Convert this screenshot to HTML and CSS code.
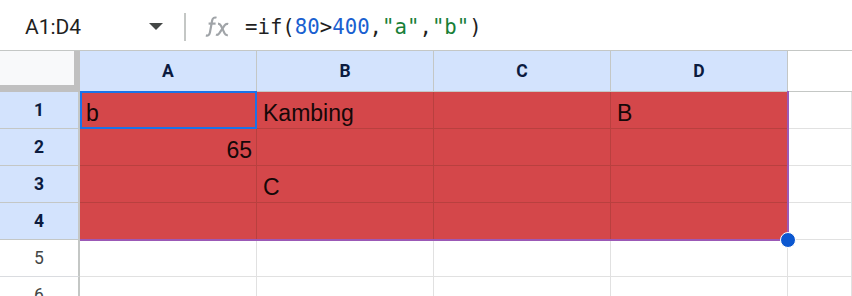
FILE: index.html
```html
<!DOCTYPE html>
<html lang="id">
<head>
    <meta charset="utf-8">
    <title>Sheet</title>
    <link rel="stylesheet" href="styles.css">
</head>
<body>
    <div class="formelbar">
        <div class="navnefelt">
            <span class="omraade">A1:D4</span>
            <span class="pil"></span>
        </div>
        <div class="skille"></div>
        <div class="fx">
            <svg width="25" height="24" viewBox="0 0 25 24">
                <path d="M11.5 2.8c-2-.8-3.8.2-4.3 2.4L4.9 17.6c-.5 2.4-2 3.4-4 2.8" fill="none" stroke="#a0a4a8" stroke-width="2.2"/>
                <path d="M3.6 8.6h7" stroke="#a0a4a8" stroke-width="2.2"/>
                <path d="M13 8.6c1.5 0 2.2.6 3 2.2l3.6 7.6c.7 1.5 1.5 2 3.2 1.7" fill="none" stroke="#a0a4a8" stroke-width="2.2"/>
                <path d="M23.2 9c-1.6-.6-2.6 0-3.6 1.4l-5.4 8c-1 1.4-2 1.8-3.2 1.2" fill="none" stroke="#a0a4a8" stroke-width="2.2"/>
            </svg>
        </div>
        <div class="formel">=if(<span class="tal">80</span>&gt;<span class="tal">400</span>,<span class="tekst">"a"</span>,<span class="tekst">"b"</span>)</div>
    </div>

    <div class="ark">
        <div class="gitter">
            <div class="hjorne"></div>
            <div class="kol valgt">A</div>
            <div class="kol valgt">B</div>
            <div class="kol valgt">C</div>
            <div class="kol valgt">D</div>
            <div class="kol tom"></div>

            <div class="raekke valgt">1</div>
            <div class="celle fyldt">b</div>
            <div class="celle fyldt">Kambing</div>
            <div class="celle fyldt"></div>
            <div class="celle fyldt">B</div>
            <div class="celle"></div>

            <div class="raekke valgt">2</div>
            <div class="celle fyldt tal-celle">65</div>
            <div class="celle fyldt"></div>
            <div class="celle fyldt"></div>
            <div class="celle fyldt"></div>
            <div class="celle"></div>

            <div class="raekke valgt">3</div>
            <div class="celle fyldt"></div>
            <div class="celle fyldt">C</div>
            <div class="celle fyldt"></div>
            <div class="celle fyldt"></div>
            <div class="celle"></div>

            <div class="raekke valgt">4</div>
            <div class="celle fyldt"></div>
            <div class="celle fyldt"></div>
            <div class="celle fyldt"></div>
            <div class="celle fyldt"></div>
            <div class="celle"></div>

            <div class="raekke">5</div>
            <div class="celle"></div>
            <div class="celle"></div>
            <div class="celle"></div>
            <div class="celle"></div>
            <div class="celle"></div>

            <div class="raekke">6</div>
            <div class="celle"></div>
            <div class="celle"></div>
            <div class="celle"></div>
            <div class="celle"></div>
            <div class="celle"></div>
        </div>

        <!-- markering ligger oven på gitteret -->
        <div class="omraade-ramme"></div>
        <div class="aktiv-ramme"></div>
        <div class="haandtag"></div>
    </div>
</body>
</html>
```

FILE: styles.css
```css
* {
    box-sizing: border-box;
}

body {
    margin: 0;
    font-family: "Liberation Sans", Arial, sans-serif;
    background-color: white;
    overflow: hidden;
}

.formelbar {
    height: 51px;
    display: flex;
    align-items: center;
    border-bottom: 1px solid #c4c7c5;
    padding-top: 3px;
}

.navnefelt {
    width: 184px;
    display: flex;
    align-items: center;
    justify-content: space-between;
    padding: 0 21px 0 25px;
    font-family: Roboto, "Liberation Sans", sans-serif;
}

.omraade {
    font-size: 21px;
    color: #1f1f1f;
}

.pil {
    width: 0;
    height: 0;
    border-left: 7px solid transparent;
    border-right: 7px solid transparent;
    border-top: 7px solid #444746;
}

.skille {
    width: 2px;
    height: 28px;
    background-color: #c4c7c5;
}

.fx {
    margin-left: 19px;
    width: 25px;
    height: 24px;
}

.formel {
    margin-left: 15px;
    font-family: "DejaVu Sans Mono", "Liberation Mono", monospace;
    font-size: 20.7px;
    color: #1f1f1f;
}

.tal {
    color: #1a5fd0;
}

.tekst {
    color: #188038;
}

.ark {
    position: relative;
}

.gitter {
    display: grid;
    grid-template-columns: 80px 177px 177px 177px 177px 1fr;
    grid-template-rows: 41px repeat(6, 37px);
}

.hjorne {
    background-color: #f8f9fa;
    border-right: 6px solid #c0c0c0;
    border-bottom: 7px solid #c0c0c0;
}

.kol {
    display: flex;
    align-items: center;
    justify-content: center;
    font-family: Roboto, "Liberation Sans", sans-serif;
    font-size: 17.5px;
    font-weight: bold;
    color: #0b1b3f;
    border-right: 1px solid #c4c7c5;
    border-bottom: 1px solid #c4c7c5;
}

.kol.tom {
    background-color: white;
    border-right: none;
}

.valgt {
    background-color: #d3e3fd;
}

.raekke {
    display: flex;
    align-items: center;
    justify-content: center;
    font-family: Roboto, "Liberation Sans", sans-serif;
    font-size: 17.5px;
    color: #444746;
    border-right: 2px solid #c4c7c5;
    border-bottom: 1px solid #dadce0;
}

.raekke.valgt {
    font-weight: bold;
    color: #0b1b3f;
    border-bottom-color: #c4c7c5;
}

.celle {
    display: flex;
    align-items: flex-end;
    padding: 0 4px 1px 6px;
    font-size: 23px;
    color: #1f1f1f;
    border-right: 1px solid #e1e1e1;
    border-bottom: 1px solid #e1e1e1;
}

.fyldt {
    background-color: #d4474a;
    color: #150808;
    border-color: #b9403f;
}

.tal-celle {
    justify-content: flex-end;
}

.omraade-ramme {
    position: absolute;
    left: 80px;
    top: 40px;
    width: 709px;
    height: 150px;
    border: 2px solid #9b59b6;
    border-left: none;
    border-top: none;
}

.aktiv-ramme {
    position: absolute;
    left: 80px;
    top: 40px;
    width: 177px;
    height: 38px;
    border: 2px solid #1a73e8;
}

.haandtag {
    position: absolute;
    left: 780px;
    top: 181px;
    width: 16px;
    height: 16px;
    border-radius: 50%;
    background-color: #0b57d0;
    border: 1px solid white;
}
```
